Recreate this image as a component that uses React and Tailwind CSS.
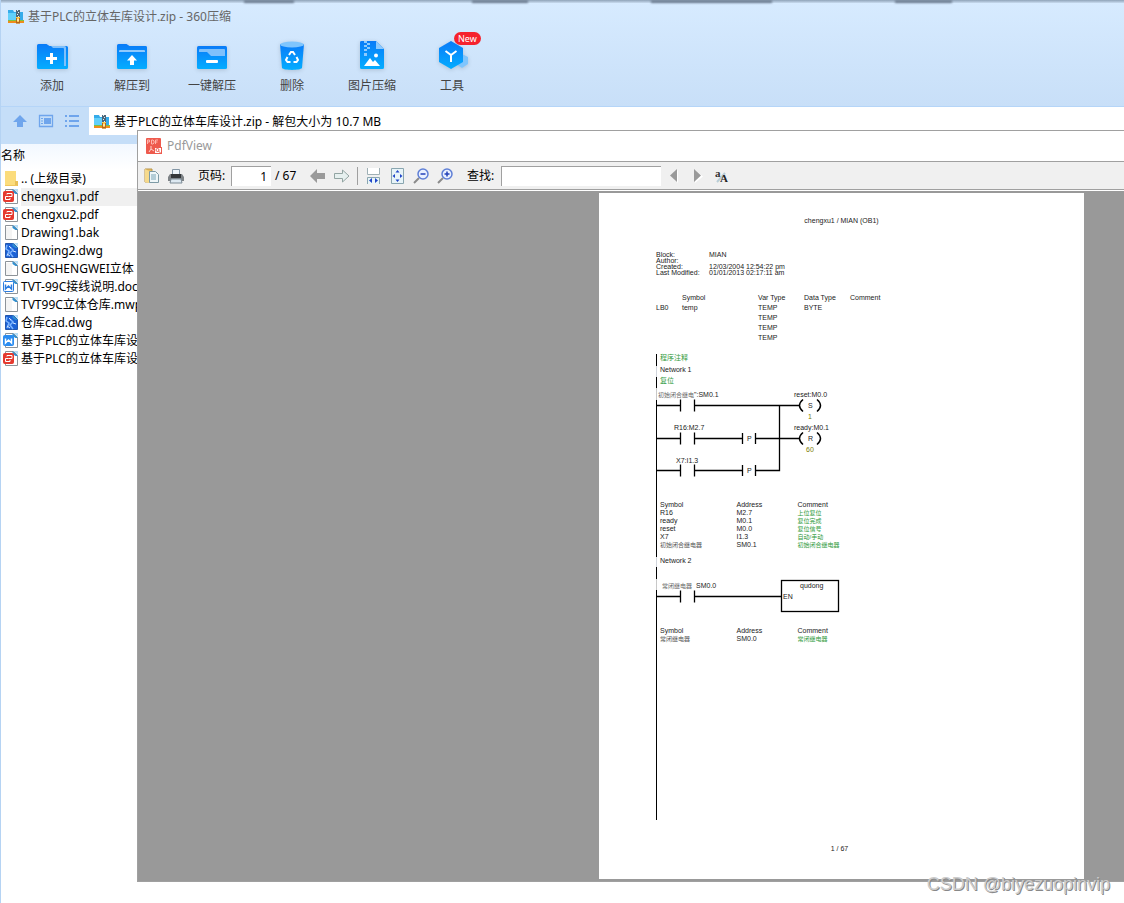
import React, { useState } from "react";

const tools = [
  { label: "添加", icon: "add" },
  { label: "解压到", icon: "extract" },
  { label: "一键解压", icon: "quick" },
  { label: "删除", icon: "trash" },
  { label: "图片压缩", icon: "image" },
  { label: "工具", icon: "tools", isNew: true },
];

const files = [
  { name: ".. (上级目录)", type: "folder" },
  { name: "chengxu1.pdf", type: "pdf" },
  { name: "chengxu2.pdf", type: "pdf" },
  { name: "Drawing1.bak", type: "blank" },
  { name: "Drawing2.dwg", type: "dwg" },
  { name: "GUOSHENGWEI立体", type: "blank" },
  { name: "TVT-99C接线说明.doc", type: "doc" },
  { name: "TVT99C立体仓库.mwp", type: "blank" },
  { name: "仓库cad.dwg", type: "dwg" },
  { name: "基于PLC的立体车库设计", type: "docx" },
  { name: "基于PLC的立体车库设计", type: "pdf" },
];

const symbols = [
  ["R16", "M2.7", "上位复位"],
  ["ready", "M0.1", "复位完成"],
  ["reset", "M0.0", "复位信号"],
  ["X7", "I1.3", "自动/手动"],
  ["初始闭合继电器", "SM0.1", "初始闭合继电器"],
];

const ZipIcon = () => (
  <svg width="16" height="16" viewBox="0 0 16 16" className="shrink-0">
    <path d="M0 1h5l1 2h9v8H0z" fill="#35abea" />
    <path d="M0 4h8v7H0z" fill="#62d0fa" />
    <path d="M0 11h16v3H0z" fill="#f08c1a" />
    <path d="M0 11h16v1H0z" fill="#7cc242" />
    <path d="M8 1h4v9H8z" fill="#4d6678" />
    <path d="M9 1h1v1H9zM10 3h1v1h-1zM9 5h1v1H9zM10 7h1v1h-1z" fill="#e4eef4" />
    <path d="M8 8h4v6.500H8z" fill="#fbc84c" />
    <path d="M8 9h1v4H8zM11 9h1v4h-1zM8 13h4v1.500H8z" fill="#b5651a" />
    <path d="M9.500 10h1v2h-1z" fill="#fff" />
  </svg>
);

const ToolIcon = ({ name }) => (
  <svg width="32" height="32" viewBox="0 0 32 32" className="drop-shadow-sm">
    <defs>
      <linearGradient id={`g-${name}`} x1="0" y1="0" x2="0" y2="1">
        <stop offset="0" stopColor="#0a7bf8" />
        <stop offset="1" stopColor="#04adff" />
      </linearGradient>
    </defs>
    {name === "add" && (
      <>
        <path
          d="M1 5.500A1.500 1.500 0 0 1 2.500 4h8l3 2H30.500A1.500 1.500 0 0 1 32 7.500v20a1.500 1.500 0 0 1-1.500 1.500h-28A1.500 1.500 0 0 1 1 27.500z"
          fill={`url(#g-${name})`}
        />
        <path d="M15 6h13.500A1.500 1.500 0 0 1 30 7.500V26h-2V9a1 1 0 0 0-1-1H17z" fill="#7fc0fb" />
        <path d="M15.500 13v11M10 18.500h11" stroke="#fff" strokeWidth="3" />
      </>
    )}
    {name === "extract" && (
      <>
        <path
          d="M1 5.500A1.500 1.500 0 0 1 2.500 4h8l3 2H29.500A1.500 1.500 0 0 1 31 7.500v20a1.500 1.500 0 0 1-1.500 1.500h-27A1.500 1.500 0 0 1 1 27.500z"
          fill={`url(#g-${name})`}
        />
        <path d="M3 12v-1a1 1 0 0 1 1-1h24a1 1 0 0 1 1 1v1z" fill="#8fc9fd" />
        <path d="M16 15l5 5.500h-3V25h-4v-4.500h-3z" fill="#fff" />
      </>
    )}
    {name === "quick" && (
      <>
        <rect x="1" y="6" width="30" height="23" rx="1.500" fill={`url(#g-${name})`} />
        <path d="M3 10a1 1 0 0 1 1-1h24a1 1 0 0 1 1 1v6H15l-4-4H3z" fill="#7fc0fb" />
        <rect x="10" y="20" width="12" height="3" rx="1" fill="#fff" />
      </>
    )}
    {name === "trash" && (
      <>
        <path d="M4 4h24l-2 24c-2 2.500-18 2.500-20 0z" fill={`url(#g-${name})`} />
        <ellipse cx="16" cy="4.500" rx="12" ry="3" fill="#7fc5fd" />
        <g fill="none" stroke="#fff" strokeWidth="2">
          <path d="M13 15l2-3h2l2 3" />
          <path d="M20.500 17l1.500 3-1.500 2H17.500" />
          <path d="M14.500 22H11.500L10 20l1.500-3" />
        </g>
      </>
    )}
    {name === "image" && (
      <>
        <path
          d="M4 2.500A1.500 1.500 0 0 1 5.500 1H20l8 8v18.500a1.500 1.500 0 0 1-1.500 1.500h-21A1.500 1.500 0 0 1 4 27.500z"
          fill={`url(#g-${name})`}
        />
        <path d="M20 1l8 8h-8z" fill="#8ecafe" />
        <path
          d="M8 1h3v2H8zM11 3h3v2h-3zM8 5h3v2H8zM11 7h3v2h-3zM8 9h3v2H8zM8 13h3v3H8z"
          fill="#8ecafe"
        />
        <path d="M8 26l6-8 3 4 2-2 5 6z" fill="#fff" />
        <circle cx="20" cy="15.500" r="2" fill="#fff" />
      </>
    )}
    {name === "tools" && (
      <>
        <path d="M26 14l6 3v7l-6 4-6-4z" fill="#7fc5fd" />
        <path d="M15 1l12 7v14l-12 7-12-7V8z" fill={`url(#g-${name})`} />
        <path d="M9.500 11l5.500 4 5.500-4M15 15v7" fill="none" stroke="#fff" strokeWidth="2" />
      </>
    )}
  </svg>
);

const FileIcon = ({ type }) => {
  if (type === "folder") {
    return (
      <svg width="18" height="18" viewBox="0 0 18 18" className="shrink-0">
        <path d="M4 1h11v11h2v4H4z" fill="#fbdc7c" />
        <path d="M14 11h3v5h-3z" fill="#e9bf58" />
        <path d="M4 15h12v1H4z" fill="#f0c65c" />
      </svg>
    );
  }
  const badge = { pdf: "#e5392f", doc: "#fff", docx: "#2b8cf0" }[type];
  return (
    <svg width="18" height="18" viewBox="0 0 18 18" className="shrink-0">
      <path
        d="M4.500 1.500h8l4 4v10h-12z"
        fill={type === "dwg" ? "#1c62d6" : "#fff"}
        stroke={type === "dwg" ? "#2456ad" : "#8d9399"}
      />
      {type === "blank" && <path d="M5 3h6v12H5z" fill="#f4f4f4" />}
      <path d="M11.500 1l5.500 5h-2.500l-3-2z" fill="#2e8fd0" />
      <path d="M12.500 1l4.500 4V1z" fill="#b6dcf5" />
      {type === "dwg" && (
        <>
          <path d="M6 3l-1 4 3 2-2 5M9 5l3 3-3 3 3 4" stroke="#7db4ff" strokeWidth="1.500" fill="none" />
          <path d="M8 4l2 2M12 9l3 1M6 12l3 2" stroke="#d5e7ff" fill="none" />
        </>
      )}
      {badge && (
        <rect
          x="2.500"
          y="3.500"
          width="10"
          height="10"
          rx="1"
          fill={badge}
          stroke={type === "doc" ? "#2b7ce0" : badge}
        />
      )}
      {type === "pdf" && (
        <path d="M6 5.500h5v3H7.500M6 5.500v1M7.500 8.500h-3v3H9v-1.500" fill="none" stroke="#fff" />
      )}
      {(type === "doc" || type === "docx") && (
        <path
          d="M4.500 6.500V11l3-3 3 3V6.500"
          fill="none"
          stroke={type === "doc" ? "#2b7ce0" : "#fff"}
          strokeWidth="1.500"
        />
      )}
    </svg>
  );
};

const Magnifier = ({ plus }) => (
  <svg width="16" height="16" viewBox="0 0 16 16">
    <path d="M1 15l5-5" stroke="#8b8b8b" strokeWidth="2" />
    <circle cx="10" cy="6" r="5" fill="#eaf1ff" stroke="#5f7fd6" strokeWidth="1.500" />
    <path d={plus ? "M7.500 6h5M10 3.500v5" : "M7.500 6h5"} stroke="#2340b8" strokeWidth="1.500" />
  </svg>
);

const Paren = ({ x, y }) => (
  <path
    d={`M${x + 4} ${y - 6}q-7 6 0 12M${x + 18} ${y - 6}q7 6 0 12`}
    fill="none"
    strokeWidth="1.500"
  />
);

// normally open contact on a rung, wires included
const Contact = ({ y, to }) => (
  <path d={`M0 ${y}H24M24.500 ${y - 6}v12M38.500 ${y - 6}v12M38 ${y}H${to}`} />
);

const NetworkOne = () => (
  <svg width="200" height="92" viewBox="0 0 200 92" className="block overflow-visible">
    <path d="M0.500 0v12" stroke="#c8c8c8" />
    <path d="M0.500 12v80" stroke="#000" />
    <g stroke="#000" strokeWidth="1.300" fill="none">
      <Contact y={17.5} to={143} />
      <Contact y={50.5} to={86} />
      <Contact y={82.5} to={86} />
      <path d="M86.500 45v11M99.500 45v11M99 50.500h44M86.500 77v11M99.500 77v11M99 82.500h24.500V17.500" />
      <Paren x={143} y={17.5} />
      <Paren x={143} y={50.5} />
    </g>
    <g fontSize="7" fill="#222">
      <text x="2" y="9" fontSize="6" fill="#666">初始闭合继电</text>
      <text x="38" y="9">&quot;:SM0.1</text>
      <text x="18" y="42">R16:M2.7</text>
      <text x="20" y="75">X7:I1.3</text>
      <text x="138" y="9">reset:M0.0</text>
      <text x="138" y="42">ready:M0.1</text>
      <text x="91" y="53">P</text>
      <text x="91" y="85">P</text>
      <text x="152" y="20">S</text>
      <text x="152" y="53">R</text>
      <text x="152" y="31" fill="#7d7d00">1</text>
      <text x="150" y="64" fill="#7d7d00">60</text>
    </g>
  </svg>
);

const NetworkTwo = () => (
  <svg width="200" height="36" viewBox="0 0 200 36" className="block overflow-visible">
    <path d="M0.500 0v11" stroke="#c8c8c8" />
    <path d="M0.500 11v25" stroke="#000" />
    <g stroke="#000" strokeWidth="1.300" fill="none">
      <Contact y={17.5} to={125} />
      <rect x="125.500" y="1.500" width="57" height="31" />
    </g>
    <g fontSize="7" fill="#222">
      <text x="6" y="9" fontSize="6" fill="#666">常闭继电器</text>
      <text x="40" y="9">SM0.0</text>
      <text x="144" y="9">qudong</text>
      <text x="127" y="20">EN</text>
    </g>
  </svg>
);

const SymbolTable = ({ rows }) => (
  <table className="w-[200px] table-fixed border-l border-black text-left text-[7px] leading-[8px]">
    <thead>
      <tr>
        <th className="w-[80px] p-0 pl-[3px] font-normal">Symbol</th>
        <th className="w-[61px] p-0 font-normal">Address</th>
        <th className="p-0 font-normal">Comment</th>
      </tr>
    </thead>
    <tbody>
      {rows.map(([symbol, address, comment]) => (
        <tr key={symbol} className="h-2">
          <td className={symbol.endsWith("继电器") ? "p-0 pl-[3px] text-[6px] text-[#555]" : "p-0 pl-[3px]"}>
            {symbol}
          </td>
          <td className="p-0">{address}</td>
          <td className="p-0 text-[6px] text-[#2f9a3c]">{comment}</td>
        </tr>
      ))}
    </tbody>
  </table>
);

const PdfPage = () => (
  <article className="flex w-[485px] shrink-0 flex-col bg-white pt-6 pb-[26px] pl-[57px] font-['Liberation_Sans','Noto_Sans_CJK_SC',sans-serif] text-[7px] leading-[8px] text-[#222]">
    <h1 className="pr-[57px] text-center">chengxu1 / MIAN (OB1)</h1>

    <dl className="mt-[27px] grid grid-cols-[53px_1fr] leading-[6px]">
      <dt>Block:</dt>
      <dd>MIAN</dd>
      <dt>Author:</dt>
      <dd></dd>
      <dt>Created:</dt>
      <dd className="flex gap-[2px]">
        <span className="w-[35px]">12/03/2004</span> <span>12:54:22 pm</span>
      </dd>
      <dt>Last Modified:</dt>
      <dd className="flex gap-[2px]">
        <span className="w-[35px]">01/01/2013</span> <span>02:17:11 am</span>
      </dd>
    </dl>

    <table className="mt-[17px] w-[240px] table-fixed text-left leading-[10px]">
      <thead>
        <tr>
          <th className="w-[26px] p-0"></th>
          <th className="w-[76px] p-0 font-normal">Symbol</th>
          <th className="w-[46px] p-0 font-normal">Var Type</th>
          <th className="w-[46px] p-0 font-normal">Data Type</th>
          <th className="p-0 font-normal">Comment</th>
        </tr>
      </thead>
      <tbody>
        {[["LB0", "temp", "BYTE"], [], [], []].map(([addr, name, type], i) => (
          <tr key={i}>
            <td className="p-0">{addr}</td>
            <td className="p-0">{name}</td>
            <td className="p-0">TEMP</td>
            <td className="p-0">{type}</td>
            <td className="p-0"></td>
          </tr>
        ))}
      </tbody>
    </table>

    <section className="mt-[11px] flex flex-1 flex-col">
      <p className="h-3 border-l border-black pl-[3px] text-[#2f9a3c]">程序注释</p>
      <h2 className="h-[11px] border-l border-gray-300 pl-[3px]">Network 1</h2>
      <p className="h-[11px] border-l border-black pl-[3px] text-[#2f9a3c]">复位</p>
      <NetworkOne />
      <div className="h-[21px] border-l border-black"></div>
      <SymbolTable rows={symbols} />
      <div className="h-2 border-l border-black"></div>
      <h2 className="h-[10px] border-l border-gray-300 pl-[3px]">Network 2</h2>
      <div className="h-3 border-l border-black"></div>
      <NetworkTwo />
      <div className="h-3 border-l border-black"></div>
      <SymbolTable rows={[["常闭继电器", "SM0.0", "常闭继电器"]]} />
      <div className="flex-1 border-l border-black"></div>
    </section>

    <footer className="mt-[25px] pr-[61px] text-center">1 / 67</footer>
  </article>
);

const PdfToolbar = () => {
  const [page, setPage] = useState("1");
  const [query, setQuery] = useState("");

  return (
    <div className="flex h-[29px] items-center border-y border-[#a0a0a0] bg-[#f0f0f0] pl-[6px] text-xs text-black">
      <div className="flex gap-2">
        <button aria-label="打开">
          <svg width="16" height="16" viewBox="0 0 16 16">
            <path d="M1 1h7v13H1z" fill="#e8bf62" stroke="#b8954a" />
            <path d="M5.500 3.500h6l3 3v8h-9z" fill="#eef6f8" stroke="#7d9aa5" />
            <path d="M7 7h5M7 9h5M7 11h5" stroke="#78a3b5" />
            <path d="M1 1l4 2v12l-4-1z" fill="#f6da8c" />
          </svg>
        </button>
        <button aria-label="打印">
          <svg width="16" height="16" viewBox="0 0 16 16">
            <path d="M4.500 1.500h7v6h-7z" fill="#eef5fb" stroke="#8396a5" />
            <path d="M2 6h12l2 3v4H0V9z" fill="#7d8286" />
            <path d="M3 6h10v4H3z" fill="#33373a" />
            <path d="M3 11h10l1 4H2z" fill="#dde9f2" stroke="#7c8b96" />
          </svg>
        </button>
      </div>
      <label htmlFor="page" className="ml-[14px] w-[33px] pt-px">页码:</label>
      <input
        id="page"
        value={page}
        onChange={(e) => setPage(e.target.value)}
        className="h-5 w-10 border-t border-l border-[#a0a0a0] bg-white pt-px pr-1 text-right outline-none"
      />
      <span className="ml-1 w-[35px] pt-px">/ 67</span>
      <div className="flex gap-2">
        <button aria-label="上一页">
          <svg width="16" height="16" viewBox="0 0 16 16">
            <path d="M0 8l7-7v4h8v6H7v4z" fill="#9a9a9a" />
          </svg>
        </button>
        <button aria-label="下一页">
          <svg width="16" height="16" viewBox="0 0 16 16">
            <path d="M15 8L8.500 2v3.500h-8v5h8V14z" fill="#e6f0ef" stroke="#93a5a3" />
          </svg>
        </button>
      </div>
      <div className="mx-[7px] h-[18px] w-px bg-[#a0a0a0]"></div>
      <div className="flex gap-2">
        <button aria-label="适合宽度">
          <svg width="16" height="16" viewBox="0 0 16 16">
            <path d="M2.500 0v6.500h12V0" fill="#fff" stroke="#9fb0b5" />
            <path d="M2.500 16V9.500h12V16" fill="#e8f4f8" stroke="#8aa6b0" />
            <path d="M4 12.500l3-2.500v5zM13 12.500L10 10v5z" fill="#1f45c8" />
          </svg>
        </button>
        <button aria-label="适合页面">
          <svg width="16" height="16" viewBox="0 0 16 16">
            <path d="M2.500 0.500h12v15h-12z" fill="#e8f4f8" stroke="#8aa6b0" />
            <path
              d="M8.500 2l2 2.500h-4zM8.500 14l2-2.500h-4zM3.500 8L6 6v4zM13.500 8L11 6v4z"
              fill="#1f45c8"
            />
          </svg>
        </button>
        <button aria-label="缩小">
          <Magnifier />
        </button>
        <button aria-label="放大">
          <Magnifier plus />
        </button>
      </div>
      <label htmlFor="find" className="ml-[14px] w-[34px] pt-px">查找:</label>
      <input
        id="find"
        value={query}
        onChange={(e) => setQuery(e.target.value)}
        className="h-5 w-40 border-t border-l border-[#a0a0a0] bg-white outline-none"
      />
      <div className="ml-[6px] flex gap-2">
        <button aria-label="查找上一个">
          <svg width="16" height="16" viewBox="0 0 16 16">
            <path d="M11 2v13L4 8.500z" fill="#fff" />
            <path d="M10 1v13L3 7.500z" fill="#9a9a9a" />
          </svg>
        </button>
        <button aria-label="查找下一个">
          <svg width="16" height="16" viewBox="0 0 16 16">
            <path d="M4 2v13l8-6.500z" fill="#fff" />
            <path d="M3 1v13l7-6.500z" fill="#9a9a9a" />
          </svg>
        </button>
        <button aria-label="区分大小写">
          <svg width="16" height="16" viewBox="0 0 16 16" fontFamily="Liberation Serif" fontWeight="bold">
            <path d="M2 14L10 5" stroke="#b9cdd6" strokeWidth="2" />
            <text x="0" y="9" fontSize="11" fill="#333">a</text>
            <text x="5" y="14" fontSize="11" fill="#222">A</text>
          </svg>
        </button>
      </div>
    </div>
  );
};

const PdfWindow = () => (
  <div className="absolute top-[130px] right-0 bottom-[21px] left-[136px] flex flex-col border-t border-b border-l border-[#a0a0a0] bg-white">
    <div className="flex h-[30px] items-center gap-[5px] pl-2 text-xs text-[#999]">
      <svg width="16" height="16" viewBox="0 0 16 16">
        <rect width="15" height="16" rx="1" fill="#ee5a4d" />
        <path
          d="M1.500 6V2h2v2h-2M5.500 2h1.500l1 1v2l-1 1H5.500zM9.500 6V2H12M9.500 4h2"
          fill="none"
          stroke="#ffb5ad"
        />
        <path d="M5 8v3l-2 3M5 11l3 2" fill="none" stroke="#ffd2cc" />
        <rect x="8.500" y="9.500" width="7" height="6" fill="#fff" stroke="#ee5a4d" />
        <circle cx="11.500" cy="12" r="1.500" fill="none" stroke="#ee5a4d" />
        <path d="M12.500 13l2 2" stroke="#ee5a4d" />
      </svg>
      PdfView
    </div>
    <PdfToolbar />
    <div className="mt-px flex flex-1 justify-end bg-[#999] pt-[2px] pr-10 pb-[2px]">
      <PdfPage />
    </div>
  </div>
);

const App = () => {
  const [selected, setSelected] = useState(1);

  return (
    <div className="relative flex h-screen flex-col overflow-hidden border-l border-[#b5d3f3] bg-white font-['Noto_Sans','Noto_Sans_CJK_SC',sans-serif] text-xs text-black">
      <header className="bg-linear-to-b from-[#d7ebff] to-[#c8dff8]">
        <div className="flex h-[3px] bg-linear-to-b from-[#8fa3b8] to-[#c9dcf0]">
          <div className="w-[243px]"></div>
          <div className="w-[50px] bg-[#6f7f93] blur-[1px]"></div>
          <div className="w-[178px]"></div>
          <div className="w-[56px] bg-[#6f7f93] blur-[1px]"></div>
          <div className="w-[123px]"></div>
          <div className="w-[121px] bg-[#6f7f93] blur-[1px]"></div>
          <div className="w-[123px]"></div>
          <div className="w-[57px] bg-[#6f7f93] blur-[1px]"></div>
        </div>
        <div className="flex h-[27px] items-center gap-1 pl-[7px] text-[#666]">
          <ZipIcon />
          <h1>基于PLC的立体车库设计.zip - 360压缩</h1>
        </div>
        <nav className="flex h-[77px] border-b border-[#b5d5f8] pt-[10px] pl-[11px] text-[#444]">
          {tools.map((tool) => (
            <button key={tool.label} className="relative flex w-20 flex-col items-center gap-[6px]">
              <ToolIcon name={tool.icon} />
              <span>{tool.label}</span>
              {tool.isNew && (
                <span className="absolute -top-2 left-[42px] h-[13px] rounded-full bg-[#f5222d] px-1 text-[9px] leading-[13px] text-white">
                  New
                </span>
              )}
            </button>
          ))}
        </nav>
      </header>

      <div className="flex h-[37px] flex-col bg-[#c5def8]">
        <div className="flex h-7">
          <div className="flex items-center gap-[10px] px-[11px]">
            <button aria-label="向上">
              <svg width="16" height="16" viewBox="0 0 16 16">
                <path d="M8 2l7 7h-4v5H5V9H1z" fill="#6fa5ec" />
              </svg>
            </button>
            <button aria-label="预览">
              <svg width="16" height="16" viewBox="0 0 16 16">
                <path d="M1.500 2.500h13v11h-13z" fill="none" stroke="#6fa5ec" strokeWidth="1.300" />
                <path d="M6 5h7v6H6zM3 5h2v1H3zM3 7.500h2v1H3zM3 10h2v1H3z" fill="#6fa5ec" />
              </svg>
            </button>
            <button aria-label="列表">
              <svg width="16" height="16" viewBox="0 0 16 16">
                <path d="M1 2h2v2H1zM5 2h10v2H5zM1 7h2v2H1zM5 7h10v2H5zM1 12h2v2H1zM5 12h10v2H5z" fill="#6fa5ec" />
              </svg>
            </button>
          </div>
          <div className="ml-[-2px] flex flex-1 items-center gap-1 bg-white pt-px pl-[5px]">
            <ZipIcon />
            基于PLC的立体车库设计.zip - 解包大小为 10.7 MB
          </div>
        </div>
      </div>

      <main className="flex-1">
        <div className="flex h-[26px] items-center bg-linear-to-b from-[#f2f8ff] to-white pb-[3px]">名称</div>
        <ul>
          {files.map((file, i) => (
            <li key={i}>
              <button
                onClick={() => setSelected(i)}
                className="flex h-[18px] w-full items-center gap-[2px] text-left whitespace-nowrap"
              >
                <FileIcon type={file.type} />
                <span className={i === selected ? "flex-1 bg-[#f0f0f0] leading-[18px]" : "flex-1 leading-[18px]"}>
                  {file.name}
                </span>
              </button>
            </li>
          ))}
        </ul>
      </main>

      <PdfWindow />

      <div className="absolute right-[14px] bottom-[7px] font-['Liberation_Sans',sans-serif] text-lg leading-6 text-[#ccc] [text-shadow:1px_1px_0_#888]">
        CSDN @biyezuopinvip
      </div>
    </div>
  );
};

export default App;
